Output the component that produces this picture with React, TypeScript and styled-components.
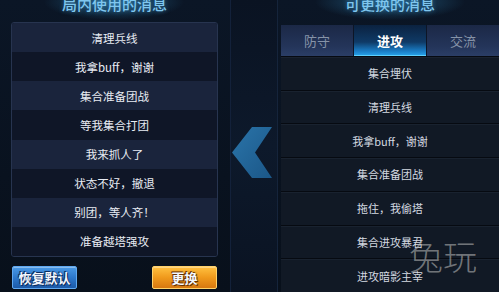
import React from "react";
import styled, { createGlobalStyle } from "styled-components";

const Global = createGlobalStyle`
  html, body { margin: 0; padding: 0; background: #08101c; }
  body {
    width: 499px; height: 292px; overflow: hidden;
    font-family: "Noto Sans CJK SC", "Noto Sans", sans-serif;
  }
  * { box-sizing: border-box; }
`;

const Screen = styled.div`
  position: relative;
  display: flex;
  width: 499px;
  height: 292px;
  overflow: hidden;
  background:
    radial-gradient(ellipse 70px 18px at 114px 2px, rgba(50, 140, 190, 0.55), rgba(50, 140, 190, 0) 100%),
    radial-gradient(ellipse 75px 18px at 390px 2px, rgba(50, 140, 190, 0.55), rgba(50, 140, 190, 0) 100%),
    linear-gradient(180deg, #0b1626 0%, #09121f 60%, #08101b 100%);
`;

const LeftColumn = styled.div`
  width: 218px;
  padding-left: 11px;
  display: flex;
  flex-direction: column;
`;

const Title = styled.div<{ $h: number }>`
  margin-top: -4px;
  height: ${(p) => p.$h}px;
  line-height: 15px;
  font-size: 15px;
  font-weight: 500;
  text-align: center;
  color: #7fc6ee;
  text-shadow: 0 0 4px rgba(70, 170, 230, 0.55);
  flex-shrink: 0;
`;

const ListBox = styled.div`
  height: 235px;
  border: 1px solid #27344f;
  border-radius: 3px;
  overflow: hidden;
  display: grid;
  grid-template-rows: repeat(8, 1fr);
  background: #0f1628;
`;

const LeftRow = styled.div<{ $alt: boolean }>`
  display: flex;
  align-items: center;
  justify-content: center;
  font-size: 11.5px;
  color: #e8ecf3;
  background: ${(p) => (p.$alt ? "#0f1627" : "#1a243c")};
`;

const ButtonRow = styled.div`
  margin-top: 9px;
  height: 23px;
  display: flex;
  justify-content: space-between;
  padding: 0 1px;
`;

const GameButton = styled.button<{ $tone: "blue" | "orange" }>`
  width: 65px;
  height: 23px;
  padding: 0;
  border-radius: 2px;
  font-family: "Noto Sans CJK SC", sans-serif;
  font-size: 13px;
  font-weight: 700;
  color: #f4f8ff;
  cursor: pointer;
  border: 1px solid ${(p) => (p.$tone === "blue" ? "#5fa8f0" : "#ffd26a")};
  background: ${(p) =>
    p.$tone === "blue"
      ? "linear-gradient(180deg, #4a9ae6 0%, #2d78cc 50%, #1c5aa8 100%)"
      : "linear-gradient(180deg, #ffc040 0%, #f09a1c 50%, #d77810 100%)"};
  text-shadow: ${(p) =>
    p.$tone === "blue"
      ? "0 0 2px #0b2d60, 1px 1px 0 #0b2d60, -1px -1px 0 #0b2d60"
      : "0 0 2px #6a3200, 1px 1px 0 #6a3200, -1px -1px 0 #6a3200"};
  box-shadow: inset 0 1px 0 rgba(255, 255, 255, 0.35);
`;

const Middle = styled.div`
  width: 63px;
  display: flex;
  flex-shrink: 0;
`;

const Rail = styled.div`
  margin-left: 12px;
  width: 48px;
  padding-top: 127px;
  padding-right: 4px;
  display: flex;
  flex-direction: column;
  align-items: center;
  border-left: 1px solid #13213a;
  border-right: 1px solid #15243b;
  background: linear-gradient(180deg, #0a1322 0%, #0d192b 50%, #0a1322 100%);
`;

const RightColumn = styled.div`
  flex: 1;
  display: flex;
  flex-direction: column;
`;

const Tabs = styled.div`
  height: 31px;
  display: flex;
  flex-shrink: 0;
  background: #0c1424;
`;

const Tab = styled.div<{ $active: boolean }>`
  flex: 1;
  display: flex;
  align-items: center;
  justify-content: center;
  font-size: 13px;
  font-weight: ${(p) => (p.$active ? 700 : 400)};
  color: ${(p) => (p.$active ? "#ffffff" : "#8693a8")};
  border-right: 1px solid #0d1526;
  background: ${(p) =>
    p.$active
      ? "linear-gradient(180deg, #0b2240 0%, #0f3a66 55%, #1a7fc8 85%, #2aa6ee 100%)"
      : "linear-gradient(180deg, #1b2846 0%, #24355a 70%, #2b3e66 100%)"};
  box-shadow: ${(p) => (p.$active ? "inset 0 -1px 0 #5cd0ff" : "none")};
  &:last-child { border-right: none; }
`;

const RightList = styled.div`
  flex: 1;
  display: grid;
  grid-template-rows: repeat(7, 1fr);
  background: #111824;
`;

const RightRow = styled.div`
  display: flex;
  align-items: center;
  justify-content: center;
  font-size: 11px;
  color: #d4d9e1;
  background: #111925;
  border-top: 1px solid #060a11;
  box-shadow: inset 0 1px 0 #19222f;
`;

const Watermark = styled.div`
  position: absolute;
  left: 409px;
  top: 239px;
  font-size: 34px;
  line-height: 34px;
  font-weight: 300;
  color: rgba(185, 185, 185, 0.58);
  pointer-events: none;
`;

const Chevron = () => (
  <svg width="40" height="51" viewBox="0 0 40 51">
    <defs>
      <linearGradient id="chev" x1="0" y1="0" x2="1" y2="1">
        <stop offset="0" stopColor="#2a74a9" />
        <stop offset="1" stopColor="#1b5788" />
      </linearGradient>
    </defs>
    <polygon points="20,0 40,0 23,25.5 40,51 20,51 0,25.5" fill="url(#chev)" />
  </svg>
);

const leftItems = [
  "清理兵线",
  "我拿buff，谢谢",
  "集合准备团战",
  "等我集合打团",
  "我来抓人了",
  "状态不好，撤退",
  "别团，等人齐！",
  "准备越塔强攻",
];

const rightItems = [
  "集合埋伏",
  "清理兵线",
  "我拿buff，谢谢",
  "集合准备团战",
  "拖住，我偷塔",
  "集合进攻暴君",
  "进攻暗影主宰",
];

const tabs = ["防守", "进攻", "交流"];

export default function App() {
  return (
    <>
      <Global />
      <Screen>
        <LeftColumn>
          <Title $h={26}>局内使用的消息</Title>
          <ListBox>
            {leftItems.map((t, i) => (
              <LeftRow key={i} $alt={i % 2 === 1}>
                {t}
              </LeftRow>
            ))}
          </ListBox>
          <ButtonRow>
            <GameButton $tone="blue">恢复默认</GameButton>
            <GameButton $tone="orange">更换</GameButton>
          </ButtonRow>
        </LeftColumn>
        <Middle>
          <Rail>
            <Chevron />
          </Rail>
        </Middle>
        <RightColumn>
          <Title $h={29}>可更换的消息</Title>
          <Tabs>
            {tabs.map((t) => (
              <Tab key={t} $active={t === "进攻"}>
                {t}
              </Tab>
            ))}
          </Tabs>
          <RightList>
            {rightItems.map((t, i) => (
              <RightRow key={i}>{t}</RightRow>
            ))}
          </RightList>
        </RightColumn>
        <Watermark>兔玩</Watermark>
      </Screen>
    </>
  );
}
